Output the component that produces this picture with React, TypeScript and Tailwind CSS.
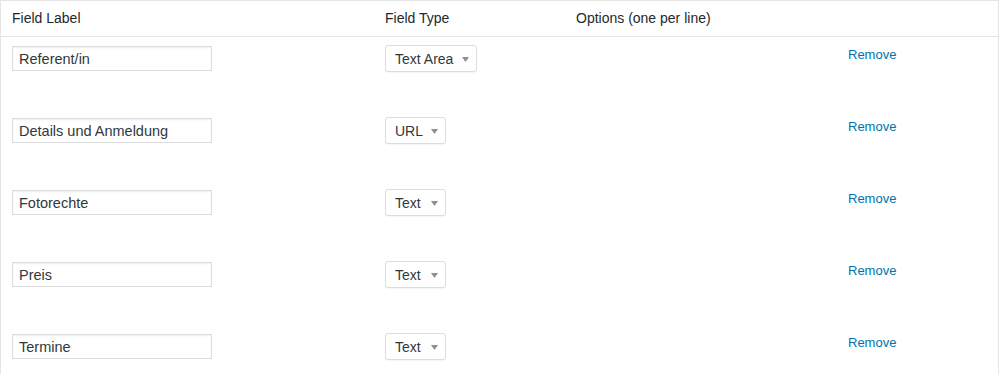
const rows = [
  { label: "Referent/in", type: "Text Area", w: "w-[92px]" },
  { label: "Details und Anmeldung", type: "URL", w: "w-[61px]" },
  { label: "Fotorechte", type: "Text", w: "w-[61px]" },
  { label: "Preis", type: "Text", w: "w-[61px]" },
  { label: "Termine", type: "Text", w: "w-[61px]" },
];

function Select({ value, w }: { value: string; w: string }) {
  return (
    <div
      className={`${w} flex h-[27px] items-center justify-between rounded-[3px] border border-[#dddddd] bg-white pl-[9px] pr-[7px] pt-[2px] text-[14px] text-[#32373c] shadow-[0_1px_1px_rgba(0,0,0,0.04)]`}
    >
      <span>{value}</span>
      <svg width="7" height="5" viewBox="0 0 7 5" className="-mt-[1px]">
        <path d="M0 0 L7 0 L3.5 5 Z" fill="#8c8f94" />
      </svg>
    </div>
  );
}

export default function App() {
  return (
    <div
      className="h-[374px] w-[1000px] overflow-hidden bg-white"
      style={{ fontFamily: '"Liberation Sans", Arial, sans-serif' }}
    >
      <div className="w-[999px] border border-b-0 border-[#e5e5e5]">
        <div className="grid h-[36px] grid-cols-[373px_191px_272px_1fr] items-center border-b border-[#e5e5e5] text-[14px] text-[#23282d]">
          <div className="pl-[11px]">Field Label</div>
          <div className="pl-[11px]">Field Type</div>
          <div className="pl-[11px]">Options (one per line)</div>
          <div />
        </div>
        {rows.map((r) => (
          <div
            key={r.label}
            className="grid h-[72px] grid-cols-[373px_191px_272px_1fr] items-start"
          >
            <div className="pl-[11px] pt-[9px]">
              <div className="flex h-[25px] w-[200px] items-center border border-[#dddddd] bg-white pl-[6px] pt-[2px] text-[14.5px] text-[#32373c] shadow-[inset_0_1px_2px_rgba(0,0,0,0.07)]">
                {r.label}
              </div>
            </div>
            <div className="pl-[11px] pt-[8px]">
              <Select value={r.type} w={r.w} />
            </div>
            <div />
            <div className="pl-[11px] pt-[8px] text-[13px] leading-[20px] text-[#0073aa]">
              Remove
            </div>
          </div>
        ))}
      </div>
    </div>
  );
}
